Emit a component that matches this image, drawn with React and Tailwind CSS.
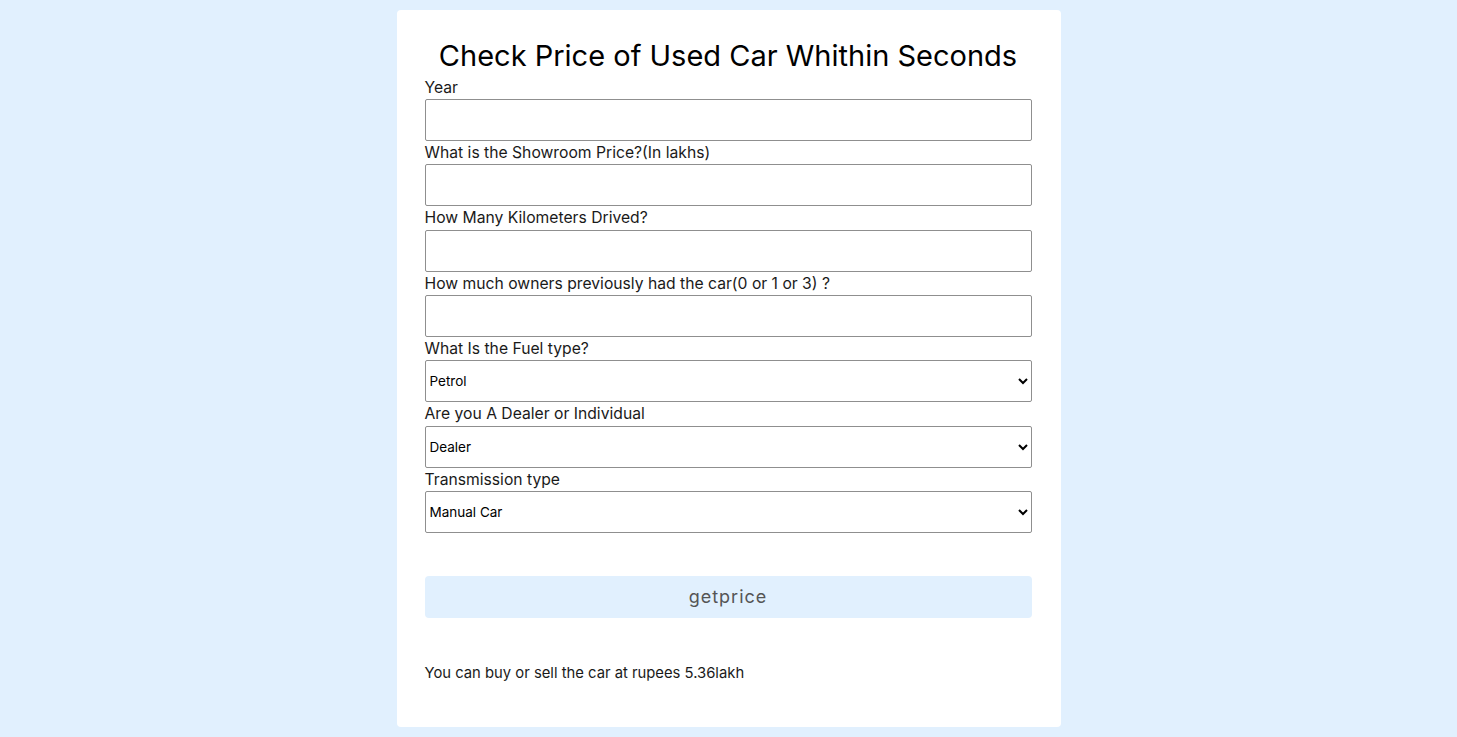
import React, { useState } from "react";

const inputClass =
  "block w-full h-[42px] border border-[#8f8f8f] rounded-[2px] bg-white px-1 text-[13.5px] text-black outline-none";
const selectClass =
  "block w-full h-[42px] border border-[#8f8f8f] rounded-[2px] bg-white pl-0 pr-1 text-[13.5px] text-black outline-none";

const Label = ({ children }) => (
  <label className="block text-[15.7px] leading-[23.35px] text-[#1a1a1a]">{children}</label>
);

const App = () => {
  const [year, setYear] = useState("");
  const [price, setPrice] = useState("");
  const [kms, setKms] = useState("");
  const [owners, setOwners] = useState("");
  const [fuel, setFuel] = useState("Petrol");
  const [seller, setSeller] = useState("Dealer");
  const [trans, setTrans] = useState("Manual Car");

  return (
    <div
      className="min-h-screen bg-[#e1f0fe] flex justify-center pt-[10px] pb-[10px]"
      style={{ fontFamily: "Inter, 'Liberation Sans', sans-serif" }}
    >
      <div className="w-[664px] bg-white rounded-[4px] pl-[28px] pr-[29px] pt-[25.5px] pb-[42px]">
        <h1 className="text-center text-[29px] leading-[40px] text-black">
          Check Price of Used Car Whithin Seconds
        </h1>

        <form onSubmit={(e) => e.preventDefault()}>
          <Label>Year</Label>
          <input className={inputClass} value={year} onChange={(e) => setYear(e.target.value)} />

          <Label>What is the Showroom Price?(In lakhs)</Label>
          <input className={inputClass} value={price} onChange={(e) => setPrice(e.target.value)} />

          <Label>How Many Kilometers Drived?</Label>
          <input className={inputClass} value={kms} onChange={(e) => setKms(e.target.value)} />

          <Label>How much owners previously had the car(0 or 1 or 3) ?</Label>
          <input className={inputClass} value={owners} onChange={(e) => setOwners(e.target.value)} />

          <Label>What Is the Fuel type?</Label>
          <select className={selectClass} value={fuel} onChange={(e) => setFuel(e.target.value)}>
            <option>Petrol</option>
            <option>Diesel</option>
            <option>CNG</option>
          </select>

          <Label>Are you A Dealer or Individual</Label>
          <select className={selectClass} value={seller} onChange={(e) => setSeller(e.target.value)}>
            <option>Dealer</option>
            <option>Individual</option>
          </select>

          <Label>Transmission type</Label>
          <select className={selectClass} value={trans} onChange={(e) => setTrans(e.target.value)}>
            <option>Manual Car</option>
            <option>Automatic Car</option>
          </select>

          <button
            type="submit"
            className="mt-[43px] w-full h-[42px] rounded-[4px] bg-[#e1f0fe] text-[18px] tracking-[1px] text-[#555]"
          >
            getprice
          </button>
        </form>

        <p className="mt-[44px] text-[14.8px] text-[#1a1a1a]">
          You can buy or sell the car at rupees 5.36lakh
        </p>
      </div>
    </div>
  );
};

export default App;
